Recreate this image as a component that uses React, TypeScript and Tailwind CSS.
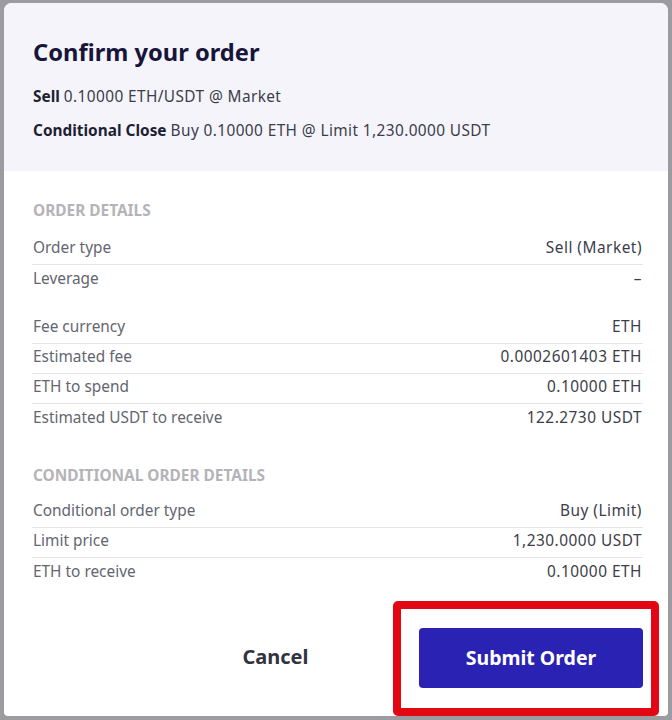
import React from "react";

type Row = { label: string; value: string; last?: boolean };

const orderRows: Row[][] = [
  [
    { label: "Order type", value: "Sell (Market)" },
    { label: "Leverage", value: "–", last: true },
  ],
  [
    { label: "Fee currency", value: "ETH" },
    { label: "Estimated fee", value: "0.0002601403 ETH" },
    { label: "ETH to spend", value: "0.10000 ETH" },
    { label: "Estimated USDT to receive", value: "122.2730 USDT", last: true },
  ],
];

const conditionalRows: Row[] = [
  { label: "Conditional order type", value: "Buy (Limit)" },
  { label: "Limit price", value: "1,230.0000 USDT" },
  { label: "ETH to receive", value: "0.10000 ETH", last: true },
];

const DetailRow = ({ label, value, last }: Row) => (
  <div
    className={`flex items-center justify-between h-[30px] pb-[3px] pl-[1px] pr-[1px] text-[15.4px] ${
      last ? "" : "border-b border-[#e3e3e8]"
    }`}
  >
    <span className="text-[#63656f]">{label}</span>
    <span className="text-[#3b3d4a] tracking-[0.5px]">{value}</span>
  </div>
);

export default function App() {
  return (
    <div
      className="w-[672px] h-[720px] bg-[#9c9ca0] pt-[3px] px-[4px] pb-[4px] overflow-hidden"
      style={{ fontFamily: "'Noto Sans', sans-serif" }}
    >
      <div className="h-full bg-white rounded-t-[8px] rounded-b-[4px] flex flex-col overflow-hidden">
        {/* header */}
        <div className="bg-[#f5f4fb] h-[168px] px-[29px] pt-[35px]">
          <h1 className="text-[23.7px] font-bold text-[#17163a] leading-[28px]">
            Confirm your order
          </h1>
          <p className="mt-[22px] text-[15.4px] text-[#3b3d4a] leading-[18px]">
            <span className="font-bold text-[#1f1f33]">Sell</span>{" "}
            <span className="tracking-[0.4px]">0.10000 ETH/USDT @ Market</span>
          </p>
          <p className="mt-[16px] text-[15.4px] text-[#3b3d4a] leading-[18px]">
            <span className="font-bold text-[#1f1f33]">Conditional Close</span>{" "}
            <span className="tracking-[0.4px]">Buy 0.10000 ETH @ Limit 1,230.0000 USDT</span>
          </p>
        </div>

        {/* details */}
        <div className="pl-[28px] pr-[25px] pt-[31px]">
          <h2 className="pl-[1px] text-[15.4px] font-bold text-[#b4b4b8] leading-[18px] mb-[15px]">
            ORDER DETAILS
          </h2>
          <div className="flex flex-col gap-[19px]">
            {orderRows.map((group, gi) => (
              <div key={gi}>
                {group.map((r) => (
                  <DetailRow key={r.label} {...r} />
                ))}
              </div>
            ))}
          </div>

          <h2 className="pl-[1px] mt-[33px] text-[15.4px] font-bold text-[#b4b4b8] leading-[18px] mb-[13px]">
            CONDITIONAL ORDER DETAILS
          </h2>
          <div>
            {conditionalRows.map((r) => (
              <DetailRow key={r.label} {...r} />
            ))}
          </div>
        </div>

        {/* actions */}
        <div className="mt-auto flex justify-end items-end pr-[9px]">
          <div className="flex-1 flex justify-center pb-[44px] pl-[154px]">
            <button className="text-[20px] font-bold text-[#333340]">Cancel</button>
          </div>
          <div className="border-[8px] border-[#e30613] rounded-[5px] pl-[18px] pr-[8px] pt-[19px] pb-[20px]">
            <button className="w-[224px] h-[60px] bg-[#2a22b2] rounded-[4px] text-white text-[19.5px] font-bold">
              Submit Order
            </button>
          </div>
        </div>
      </div>
    </div>
  );
}
